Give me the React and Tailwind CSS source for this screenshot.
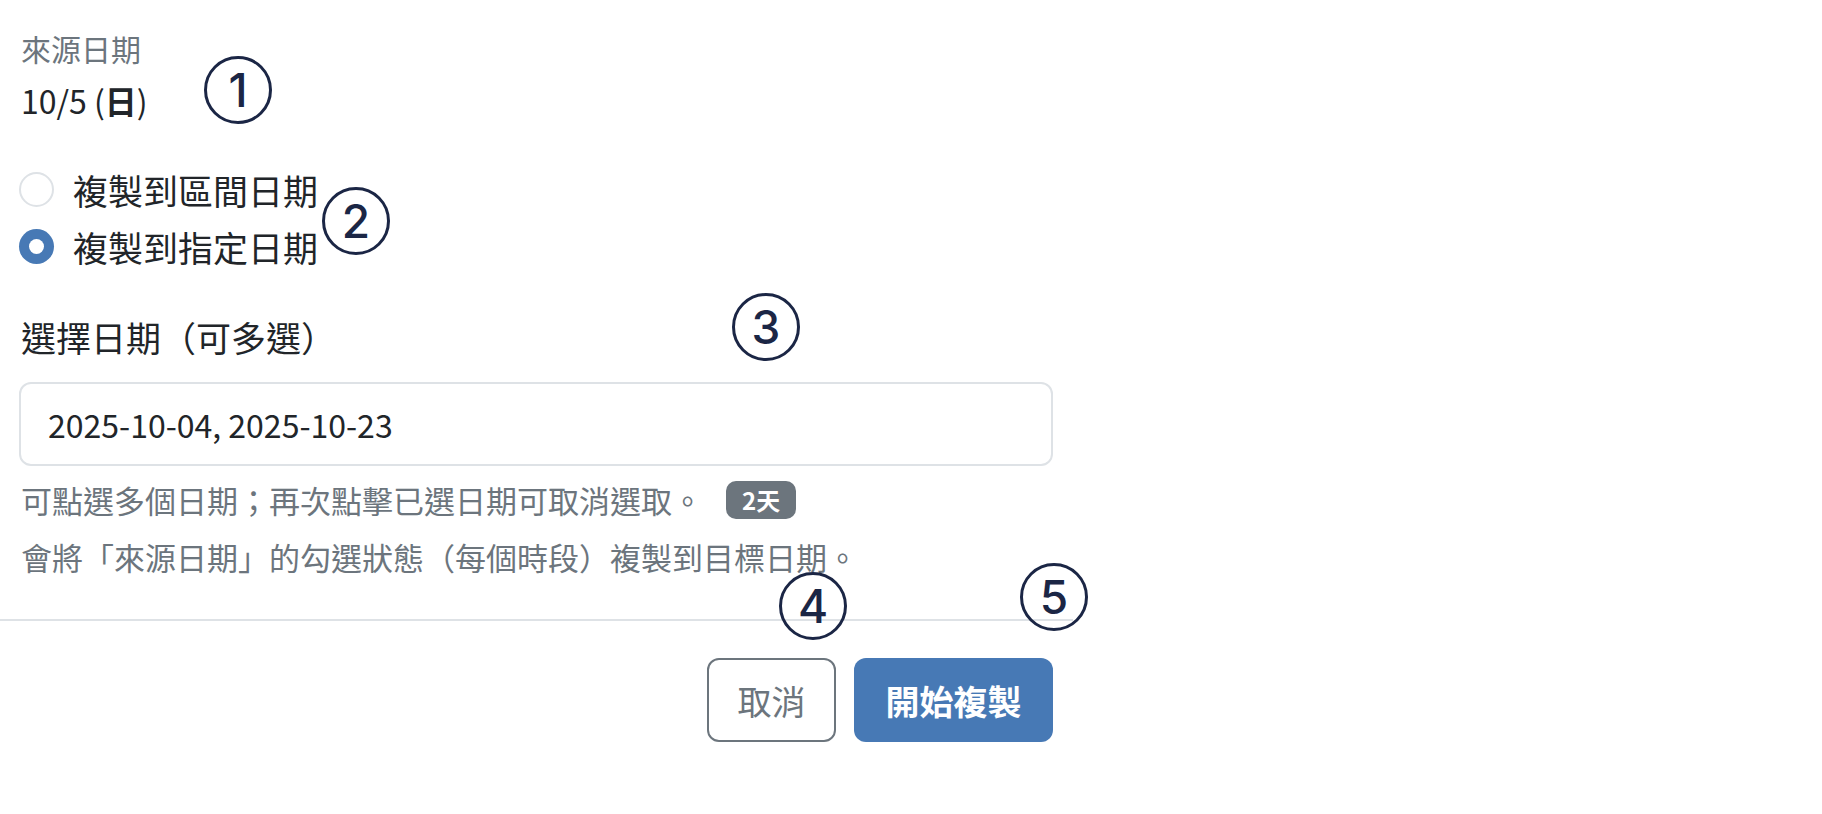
import { useState } from 'react';

const Marker = ({ n, className }) => (
  <div
    className={`absolute w-[68px] h-[68px] rounded-full border-[3px] border-[#1b2645] flex items-center justify-center text-[#1b2645] text-[46px] font-medium leading-none ${className}`}
    style={{ fontFamily: 'Inter, "Liberation Sans", sans-serif' }}
  >
    {n}
  </div>
);

const Radio = ({ checked, label, onClick }) => (
  <label onClick={onClick} className="flex items-center h-[57px] cursor-pointer">
    {checked ? (
      <span className="w-[35px] h-[35px] rounded-full bg-[#4779b5] flex items-center justify-center">
        <span className="w-[15px] h-[15px] rounded-full bg-white" />
      </span>
    ) : (
      <span className="w-[35px] h-[35px] rounded-full border-2 border-[#dee2e6] bg-white" />
    )}
    <span className="ml-[19px] text-[35px] leading-[51px] text-[#212529]">{label}</span>
  </label>
);

export default function App() {
  const [mode, setMode] = useState('pick');

  return (
    <div
      className="relative w-[1822px] h-[814px] bg-white overflow-hidden"
      style={{ fontFamily: '"Noto Sans CJK TC", "Noto Sans", sans-serif' }}
    >
      <div className="w-[1073px] flex flex-col">
        <div className="pl-[19px] pr-[20px] pt-[26px] flex flex-col">
          <div className="text-[30px] leading-[45px] text-[#6c757d] pl-[2px]">來源日期</div>
          <div className="mt-[4px] text-[32px] leading-[51px] text-[#212529] pl-[2px]">
            10/5 (<span className="font-bold">日</span>)
          </div>

          {/* copy mode */}
          <div className="mt-[35px] flex flex-col">
            <Radio checked={mode === 'range'} label="複製到區間日期" onClick={() => setMode('range')} />
            <Radio checked={mode === 'pick'} label="複製到指定日期" onClick={() => setMode('pick')} />
          </div>

          <div className="mt-[36px] text-[35px] leading-[51px] text-[#212529] pl-[2px]">
            選擇日期（可多選）
          </div>
          <input
            type="text"
            readOnly
            value="2025-10-04, 2025-10-23"
            className="mt-[20px] w-full h-[84px] border-2 border-[#dee2e6] rounded-[12px] px-[27px] text-[32px] text-[#212529] outline-none"
            style={{ fontFamily: '"Noto Sans CJK TC", sans-serif' }}
          />
          <div className="mt-[11px] h-[45px] flex items-center pl-[2px]">
            <span className="text-[31px] leading-[45px] text-[#6c757d]">可點選多個日期；再次點擊已選日期可取消選取。</span>
            <span className="ml-[23px] h-[38px] px-[16px] rounded-[10px] bg-[#6c757d] text-white text-[24px] font-bold flex items-center">
              2天
            </span>
          </div>
          <div className="mt-[12px] text-[31px] leading-[45px] text-[#6c757d] pl-[2px]">
            會將「來源日期」的勾選狀態（每個時段）複製到目標日期。
          </div>
        </div>

        <div className="mt-[40px] border-t-2 border-[#dee2e6] pt-[37px] pr-[20px] flex justify-end gap-[18px]">
          <button className="w-[129px] h-[84px] border-2 border-[#6c757d] rounded-[12px] text-[34px] text-[#6c757d]">
            取消
          </button>
          <button className="w-[199px] h-[84px] rounded-[12px] bg-[#4779b5] text-[34px] text-white font-bold">
            開始複製
          </button>
        </div>
      </div>

      <Marker n="1" className="left-[204px] top-[56px]" />
      <Marker n="2" className="left-[322px] top-[187px]" />
      <Marker n="3" className="left-[732px] top-[293px]" />
      <Marker n="4" className="left-[779px] top-[572px]" />
      <Marker n="5" className="left-[1020px] top-[563px]" />
    </div>
  );
}
